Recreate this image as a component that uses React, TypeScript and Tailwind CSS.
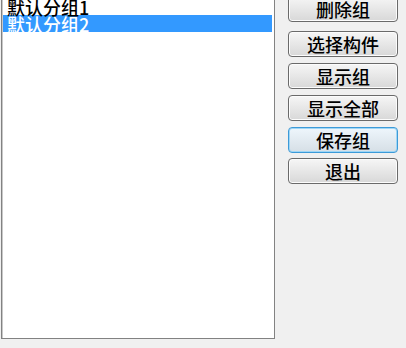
import React from "react";

const font = { fontFamily: '"Noto Sans CJK SC", "Noto Sans", sans-serif' };

function Btn({ label, focused = false, className = "" }: { label: string; focused?: boolean; className?: string }) {
  return (
    <button
      className={
        "w-[110px] h-[26px] rounded-[4px] flex items-center justify-center text-[18px] leading-none font-medium text-black " +
        (focused
          ? "border border-[#3c9ad8] bg-gradient-to-b from-[#eef6fc] to-[#d6dfe6] shadow-[inset_0_0_0_1px_#9fd6f5] "
          : "border border-[#6a6a6a] bg-gradient-to-b from-[#f6f6f6] to-[#d8d8d8] shadow-[inset_0_0_0_1px_#fcfcfc] ") +
        className
      }
      style={font}
    >
      {label}
    </button>
  );
}

export default function App() {
  return (
    <div className="w-[406px] h-[348px] bg-[#f0f0f0] overflow-hidden flex items-start" style={font}>
      <div className="ml-[1px] mt-[-4px] w-[274px] h-[343px] bg-white border border-[#828282] shadow-[inset_1px_1px_0_#c8c8c8] pt-[1px] pl-[1px] pr-[1px]">
        <div className="h-[17px] flex items-center pl-[4px] text-[18px] leading-none font-medium text-black">默认分组1</div>
        <div className="h-[17px] mr-[1px] flex items-center pl-[4px] text-[18px] leading-none font-medium text-white bg-[#3399ff]">默认分组2</div>
      </div>
      <div className="ml-[13px] mt-[-4px] flex flex-col">
        <Btn label="删除组" />
        <Btn label="选择构件" className="mt-[9px]" />
        <Btn label="显示组" className="mt-[6px]" />
        <Btn label="显示全部" className="mt-[6px]" />
        <Btn label="保存组" focused className="mt-[6px]" />
        <Btn label="退出" className="mt-[5px]" />
      </div>
    </div>
  );
}
